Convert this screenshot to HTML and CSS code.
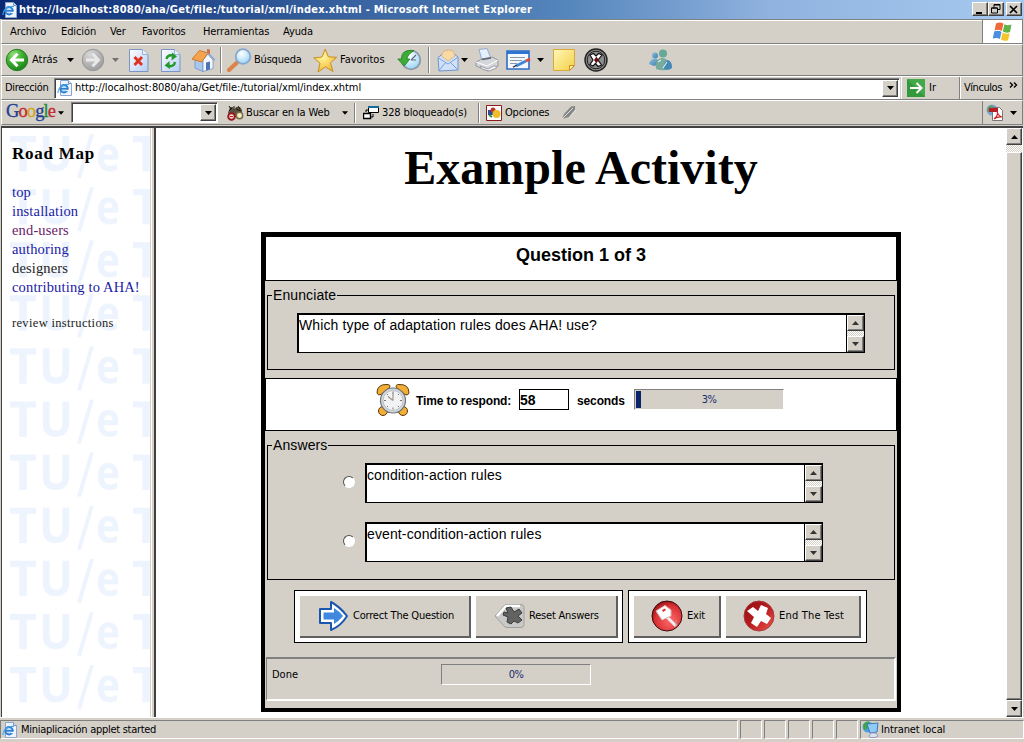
FILE: index.html
```html
<!DOCTYPE html>
<html lang="es">
<head>
<meta charset="utf-8">
<title>http://localhost:8080/aha/Get/file:/tutorial/xml/index.xhtml - Microsoft Internet Explorer</title>
<link rel="stylesheet" href="styles.css">
</head>
<body>
<svg class="defs" width="0" height="0">
  <defs>
    <linearGradient id="sheet" x1="0" y1="0" x2="1" y2="1"><stop offset="0" stop-color="#fff"/><stop offset="1" stop-color="#b4cdf2"/></linearGradient>
    <radialGradient id="green" cx=".35" cy=".25" r=".8"><stop offset="0" stop-color="#9be07c"/><stop offset=".5" stop-color="#3fae32"/><stop offset="1" stop-color="#19801a"/></radialGradient>
    <radialGradient id="grey" cx=".35" cy=".25" r=".8"><stop offset="0" stop-color="#d8d8d8"/><stop offset="1" stop-color="#9a9a9a"/></radialGradient>
    <radialGradient id="gold" cx=".4" cy=".35" r=".7"><stop offset="0" stop-color="#fff6a0"/><stop offset="1" stop-color="#f3b52c"/></radialGradient>
    <radialGradient id="lens" cx=".4" cy=".3" r=".8"><stop offset="0" stop-color="#fff"/><stop offset="1" stop-color="#8fd0f4"/></radialGradient>
    <radialGradient id="red" cx=".6" cy=".65" r=".7"><stop offset="0" stop-color="#ff6a6a"/><stop offset=".7" stop-color="#d93034"/><stop offset="1" stop-color="#8a1014"/></radialGradient>
    <linearGradient id="darkred" x1="0" y1="0" x2="1" y2="1"><stop offset="0" stop-color="#8d0d10"/><stop offset=".5" stop-color="#b81c1f"/><stop offset="1" stop-color="#ef5a50"/></linearGradient>
    <linearGradient id="note" x1="0" y1="0" x2="1" y2="1"><stop offset="0" stop-color="#fff8b8"/><stop offset="1" stop-color="#f4cf45"/></linearGradient>
    <linearGradient id="person" x1="0" y1="0" x2="1" y2="1"><stop offset="0" stop-color="#8fc3df"/><stop offset="1" stop-color="#3a7aa8"/></linearGradient>
    <pattern id="tue" x="7" y="6" width="123" height="53.1" patternUnits="userSpaceOnUse">
      <g class="mark"><text x="0" y="37" textLength="28" lengthAdjust="spacingAndGlyphs">T</text><text x="30" y="37" textLength="34" lengthAdjust="spacingAndGlyphs">U</text><path d="M83 0 70 44" stroke="#eef4fd" stroke-width="4"/><text x="87" y="37" textLength="24" lengthAdjust="spacingAndGlyphs">e</text></g>
    </pattern>
    <symbol id="ie" viewBox="0 0 16 16"><path d="M3.500.5h8l3 3v12h-11z" fill="#eef4fd" stroke="#8ea6cc"/><path d="M11.500.5v3h3" fill="#cfe0f8" stroke="#7d94bd"/><circle cx="7" cy="8.800" r="3.700" fill="#bfe0fa" stroke="#2a7fd0" stroke-width="2"/><path d="M4 8.800h6.500" stroke="#2a78c8" stroke-width="1.500"/><path d="M9 10.500h3" stroke="#eef4fd" stroke-width="1.300"/><path d="M1 13C.5 9 5 3.500 12 4.500" fill="none" stroke="#4aa3e6" stroke-width="1.200"/></symbol>
    <symbol id="down" viewBox="0 0 7 4"><path d="M0 0h7L3.500 4z" fill="#000"/></symbol>
    <symbol id="up" viewBox="0 0 7 4"><path d="M0 4h7L3.500 0z" fill="#000"/></symbol>
  </defs>
</svg>
<div class="window">
  <header class="titlebar">
    <svg class="i16 title-icon"><use href="#ie"/></svg>
    <span class="title-text">http://localhost:8080/aha/Get/file:/tutorial/xml/index.xhtml - Microsoft Internet Explorer</span>
    <div class="caption-buttons">
      <i class="cap"><svg width="10" height="9"><path d="M1 7h6v2H1z"/></svg></i>
      <i class="cap"><svg width="10" height="10" fill="none" stroke="#000"><path d="M3 3.500V.5h6v5H7M3 1h6"/><path d="M.5 4v5h6V4zM.5 4h6" stroke-width="1"/></svg></i>
      <i class="cap close"><svg width="10" height="9" stroke="#000" stroke-width="1.700"><path d="M1 1l7 7M8 1L1 8"/></svg></i>
    </div>
  </header>

  <nav class="band menu">
    <span class="m1">Archivo</span><span class="m2">Edición</span><span class="m3">Ver</span><span class="m4">Favoritos</span><span class="m5">Herramientas</span><span class="m6">Ayuda</span>
    <div class="flag"><svg width="22" height="20" viewBox="0 0 22 20"><path d="M4 1.500q4-2.200 7.500.2L9.800 9Q6.500 7 2.500 8.500z" fill="#ef6a3a"/><path d="M12.500 2.200q3.500 2 7 .4L18 10q-3.500 1.500-7.200-.5z" fill="#62b346"/><path d="M2.200 9.600q4-1.600 7.300.3L7.900 17Q5 15 .8 16.600z" fill="#4a8fe0"/><path d="M10.600 10.500q3.600 2 7.200.7L16 18.200q-3.400 1.400-7-.7z" fill="#f6c52c"/></svg></div>
  </nav>

  <div class="band tools">
    <svg class="t-back" width="24" height="24"><circle cx="12" cy="12" r="10.700" fill="url(#green)" stroke="#238022"/><path d="M19 12H7M12.500 5.800 6.500 12l6 6.200" fill="none" stroke="#fff" stroke-width="3"/></svg>
    <span class="l-back">Atrás</span><svg class="caret c1"><use href="#down"/></svg>
    <svg class="t-fwd" width="24" height="24"><circle cx="12" cy="12" r="10.700" fill="url(#grey)" stroke="#969696"/><path d="M5 12h12M11.500 5.800l6 6.200-6 6.200" fill="none" stroke="#e9e9e9" stroke-width="2.800"/></svg>
    <svg class="caret c2"><use href="#down"/></svg>
    <svg class="t-stop" width="20" height="23"><path d="M.5.500h13l5.500 5v17H.5z" fill="url(#sheet)" stroke="#7a95c4"/><path d="M13.500.5v5H19" fill="#e9f1fd" stroke="#9ab2d8"/><path d="M5.500 8l7.500 8M13 8l-7.500 8" stroke="#e03020" stroke-width="2.800"/></svg>
    <svg class="t-refresh" width="20" height="23"><path d="M.5.500h13l5.500 5v17H.5z" fill="url(#sheet)" stroke="#7a95c4"/><path d="M13.500.5v5H19" fill="#e9f1fd" stroke="#9ab2d8"/><path d="M5.500 10q1-4.500 6.500-3.500M14 13q-1 5-6.500 4" fill="none" stroke="#249a2c" stroke-width="2.400"/><path d="M11 3.500l5 4-5.500 4zM8.500 12l-5 4.500 5.500 3.500z" fill="#249a2c"/></svg>
    <svg class="t-home" width="26" height="24"><path d="M5 12v8l8 3.500V11z" fill="#a8c8f0" stroke="#7592c4" stroke-width=".8"/><path d="M13 12l5-6 5 6v8.500l-10 3z" fill="#f5f9ff" stroke="#7592c4" stroke-width=".8"/><path d="M2 11 9.500 2.500 18 5l-6.500 9z" fill="#f5a34c" stroke="#cc7a2e"/><path d="M17.500 4.500l7 8" stroke="#8fa9d2" stroke-width="2"/><path d="M16 14.500l4-1v7.700l-4 1.200z" fill="#4c76b8"/><path d="M17 1l3 .5v5l-3-2z" fill="#d0704b"/></svg>
    <i class="sep s1"></i>
    <svg class="t-search" width="25" height="24"><path d="M10 14.500 2 22" stroke="#dc8448" stroke-width="4.200" stroke-linecap="round"/><circle cx="16" cy="8.500" r="7.300" fill="url(#lens)" stroke="#86a8cf" stroke-width="1.800"/></svg>
    <span class="l-search">Búsqueda</span>
    <svg class="t-star" width="25" height="25"><path d="M12.200 1l3.200 7.800 8.300.5-6.300 5.600 2.600 8.600-7.600-4.600-7.400 5.100 2-8.800L.8 9.800l8.200-.7z" fill="url(#gold)" stroke="#c98f25"/></svg>
    <span class="l-fav">Favoritos</span>
    <svg class="t-hist" width="25" height="24"><circle cx="14" cy="12" r="9.300" fill="url(#lens)" stroke="#8b99a8" stroke-width="1.800"/><path d="M14 12l5-5M14 12h5" stroke="#5a6a7a" stroke-width="1.200"/><path d="M17 2.500Q4 1 4.500 11H.8l6.500 7 5.500-7H10q0-4 7-8.500z" fill="#3dac37" stroke="#1f7e20" stroke-width=".8"/></svg>
    <i class="sep s2"></i>
    <svg class="t-mail" width="22" height="24"><path d="M1 9.500 9.500 3q2-1 4 0L21 9v13L2 23z" fill="#cfe2fa" stroke="#6f93cc"/><path d="M4.500 8q1-6 7-6t6.500 6l-7 5z" fill="#f9d9a4" stroke="#e0a868" stroke-width=".7"/><path d="M1.500 10l9.500 6 9.500-6.500M2 22.500l6.500-8M20.500 21.500 13.500 14.500" fill="none" stroke="#7ba0d8"/></svg>
    <svg class="caret c3"><use href="#down"/></svg>
    <svg class="t-print" width="24" height="24"><path d="M4 1.500 12 .5l4 10-9 2z" fill="#e3effd" stroke="#829dcc" stroke-width=".8"/><path d="M1 14l6-3 10-2 6 3v6l-10 5L1 18z" fill="#d4d6da" stroke="#83878e" stroke-width=".8"/><path d="M7 11.500l9-1.500" stroke="#5f6670" stroke-width="1.500"/><path d="M1 14l11 4 11-6" fill="none" stroke="#fff"/><path d="M5 18l8 3 7-3.500 1.500 2.500L14 23l-7-2z" fill="#f7f8fa" stroke="#8b8f95" stroke-width=".8"/></svg>
    <svg class="t-edit" width="26" height="20"><path d="M1 1h22v18H1z" fill="#f3f7fe" stroke="#2f6cc6" stroke-width="1.600"/><path d="M1 1h22v3H1z" fill="#2f74d0"/><path d="M4 7.500h15M4 10.500h12M4 13.500h7" stroke="#8a97ac"/><path d="M10 16l10-5" stroke="#3d86d8" stroke-width="2.800"/><path d="M20 11l4-2" stroke="#e24a3b" stroke-width="3"/><path d="M7 17.200l3.500-2" stroke="#222" stroke-width="1.300"/></svg>
    <svg class="caret c4"><use href="#down"/></svg>
    <svg class="t-note" width="22" height="22"><path d="M.5.500h21V17l-5 4.500H.5z" fill="url(#note)" stroke="#dba93a"/><path d="M21.500 16.500h-5v5z" fill="#fff0a0" stroke="#c98f2d"/></svg>
    <svg class="t-x" width="24" height="24"><circle cx="12" cy="12" r="11" fill="#8c8c8c" stroke="#222" stroke-width="1.400"/><circle cx="12" cy="12" r="8.800" fill="#8c8c8c" stroke="#222" stroke-width="1"/><path d="M6 7l3.500-1.500L12 8l2.500-2.500L18 7l-4 5 3.500 5-3.500 1.500-2.500-3-2.500 2.500L6 16.500 9 12z" fill="#fff" stroke="#111" stroke-width="1.200"/><path d="M12.500 8.500l2 3.500-2 3.500-2.500-3.500z" fill="#611"/></svg>
    <svg class="t-msn" width="26" height="22"><g fill="url(#person)"><circle cx="7" cy="6.500" r="3"/><path d="M1 15q1-5 6-5.500 4 .5 5 5.500l-6 2z"/></g><circle cx="15" cy="4.500" r="4" fill="#65a997"/><path d="M8 20q-1-10 6-11 8 0 8 11-7 2.500-14 0z" fill="#77ac9c"/><path d="M16 20q-1-7 4-9 4.500 2 4 8-3 3-8 1z" fill="#4688b5"/><path d="M10 13l3-2M15 19l4-6" stroke="#d7ece8" stroke-width="1.200"/></svg>
  </div>

  <div class="band address">
    <span class="l-dir">Dirección</span>
    <div class="addr-box"><svg class="i16"><use href="#ie"/></svg><span class="l-url">http://localhost:8080/aha/Get/file:/tutorial/xml/index.xhtml</span><i class="drop"><svg class="caret"><use href="#down"/></svg></i></div>
    <div class="go"><svg width="18" height="18"><path d="M0 0h18v18H0z" fill="#329a3b"/><path d="M0 0h18v18z" fill="#54b556" opacity=".5"/><path d="M3 9h11M9.500 4l5 5-5 5" fill="none" stroke="#fff" stroke-width="2"/></svg><span class="l-go">Ir</span></div>
    <div class="links"><span class="l-links">Vínculos</span><svg width="9" height="6" fill="none" stroke="#000" stroke-width="1.400"><path d="M1 .5 3.500 3 1 5.500M5 .5 7.500 3 5 5.500"/></svg></div>
  </div>

  <div class="band google">
    <span class="logo"><b class="gb">G</b><b class="gr">o</b><b class="gy">o</b><b class="gb">g</b><b class="gg">l</b><b class="gr">e</b></span>
    <svg class="caret g1"><use href="#down"/></svg>
    <div class="g-box"><i class="drop"><svg class="caret"><use href="#down"/></svg></i></div>
    <svg class="g-bino" width="17" height="16"><path d="M1 8 3 2h3l1 3 2-3h4l2 3v5l-3 2H3z" fill="#5b5142"/><path d="M2 1l2 3M7 1v4M11 1l2 3M5 3l-3 3M9 4l5 2" stroke="#17130d"/><circle cx="4.500" cy="11.500" r="3.300" fill="#fbdedb" stroke="#9b181a" stroke-width="1.900"/><circle cx="12.500" cy="10.500" r="3.200" fill="#f8edc1" stroke="#766b4d" stroke-width="1.500"/><path d="M3 11.500h3" stroke="#c11d20"/></svg>
    <span class="l-buscar">Buscar en la Web</span><svg class="caret g2"><use href="#down"/></svg>
    <i class="sep s3"></i>
    <svg class="g-pop" width="16" height="15"><path d="M5.500 1.500h10v6h-10z" fill="#fff" stroke="#000"/><path d="M5 1h11v2H5z" fill="#156c9b"/><path d="M.5 8.500h7v5h-7z" fill="#fff" stroke="#000" stroke-width="1.400"/><path d="M10 9v3H8M3 7V5h2" fill="none" stroke="#000"/></svg>
    <span class="l-block">328 bloqueado(s)</span>
    <i class="sep s4"></i>
    <svg class="g-opt" width="16" height="16"><path d="M.5.500h15v15H.5z" fill="#fff" stroke="#8a1b20"/><path d="M2 5h5v5H2z" fill="#26509f"/><circle cx="7" cy="5" r="2.500" fill="#bd3528"/><circle cx="10.500" cy="9" r="4" fill="#efbc2d"/><path d="M3 10l3 2" stroke="#2e8a3d" stroke-width="2"/></svg>
    <span class="l-opt">Opciones</span>
    <svg class="g-pen" width="16" height="15"><path d="M1 14 3 9 10 1.500l4-.5v3.500L8 12z" fill="#858585"/><path d="M1 14 12 3M8.500 12.500 15 5" stroke="#e2e2e2" stroke-width="1"/></svg>
    <div class="pdf"><svg width="18" height="17"><circle cx="6" cy="6" r="5.500" fill="#7ea4cc"/><path d="M2 3q3-3 6 0l-3 4-4 1z" fill="#5c9c67"/><path d="M6.500 3.500h7l3 3v10h-10z" fill="#fff" stroke="#777"/><path d="M3 4h9v4H3z" fill="#b51c25"/><path d="M8 15q5-4 3-8 1 5 5 6-5-.5-8 2z" fill="none" stroke="#c22" stroke-width="1.200"/></svg><svg class="caret"><use href="#down"/></svg></div>
  </div>

  <main class="content">
    <aside class="sidebar">
      <svg class="wallpaper" width="148" height="588"><rect width="148" height="588" fill="url(#tue)"/></svg>
      <h2>Road Map</h2>
      <ul>
        <li><a>top</a></li><li><a>installation</a></li><li><a class="visited">end-users</a></li><li><a>authoring</a></li><li><a class="plain">designers</a></li><li><a>contributing to AHA!</a></li>
      </ul>
      <p>review instructions</p>
    </aside>
    <div class="splitter"></div>
    <section class="page">
      <h1>Example Activity</h1>
      <div class="applet">
        <div class="panel question">Question 1 of 3</div>
        <div class="group enun">
          <span class="legend">Enunciate</span>
          <div class="area wide"><span class="txt">Which type of adaptation rules does AHA! use?</span><div class="sb"><i class="sbb"><svg class="caret"><use href="#up"/></svg></i><i class="sbt"></i><i class="sbb"><svg class="caret"><use href="#down"/></svg></i></div></div>
        </div>
        <div class="panel timer">
          <svg class="clock" width="34" height="34"><g fill="#f2ae35" stroke="#5b3a0b" stroke-width="1"><path d="M1 10Q1 1 11 1.500q4 0 2.500 3L5 11.500q-3 1.500-4-1.500zM33 10Q33 1 23 1.500q-4 0-2.500 3l8.500 7q3 1.500 4-1.500z"/><circle cx="7" cy="28" r="4.500"/><circle cx="27" cy="28" r="4.500"/></g><circle cx="17" cy="17.500" r="12.500" fill="#d3d7da" stroke="#6d7276" stroke-width="1.200"/><circle cx="17" cy="17.500" r="10" fill="#f1f2f4" stroke="#b9c0c6"/><path d="M17 17.500V10M17 17.500l-5-4" stroke="#a08a86" stroke-width="1.100"/><path d="M17 8.500v2M17 24.500v2M8 17.500h2M24 17.500h2M11 11l1 1M23 11l-1 1M11 24l1-1M23 24l-1-1" stroke="#777"/></svg>
          <b class="l-time">Time to respond:</b><b class="num">58</b><b class="l-sec">seconds</b>
          <div class="progress p3"><i class="fill"></i><span>3%</span></div>
        </div>
        <div class="group ans">
          <span class="legend">Answers</span>
          <div class="row"><i class="radio"></i><div class="area"><span class="txt">condition-action rules</span><div class="sb"><i class="sbb"><svg class="caret"><use href="#up"/></svg></i><i class="sbt"></i><i class="sbb"><svg class="caret"><use href="#down"/></svg></i></div></div></div>
          <div class="row"><i class="radio"></i><div class="area"><span class="txt">event-condition-action rules</span><div class="sb"><i class="sbb"><svg class="caret"><use href="#up"/></svg></i><i class="sbt"></i><i class="sbb"><svg class="caret"><use href="#down"/></svg></i></div></div></div>
        </div>
        <div class="buttons">
          <div class="set first">
            <div class="btn b1"><svg width="32" height="32"><path d="M2 9h11V2q8 4 16 14-6 10-16 14v-7H2z" fill="#fff" stroke="#1b56b0" stroke-width="2" stroke-linejoin="round"/><path d="M5.500 12.500H16V8q5 3 9 8-4 5-9 8v-4.500H5.500z" fill="#3f88dd"/></svg><span>Correct The Question</span></div>
            <div class="btn b2"><svg width="32" height="26"><path d="M1 13 10 3q1-1.500 3-1.500h14q3 0 3 3v17q0 3-3 3H13q-2 0-3-1.500z" fill="#c9c9c7" stroke="#9f9f9d"/><path d="M3 13 11 4q1-1 3-1h12" fill="none" stroke="#fff" stroke-width="2.500"/><path d="M12 5l5-1 3 5 5-3 3 4-4 3 4 4-4 3-4-2-3 3-4-2 1-5-5-2 1-3 4 1z" fill="#626262" stroke="#3a3a3a"/></svg><span>Reset Answers</span></div>
          </div>
          <div class="set">
            <div class="btn b3"><svg width="32" height="32"><circle cx="16" cy="16" r="15" fill="url(#red)" stroke="#3b0808"/><path d="M16 17l9 9" stroke="#eee" stroke-width="3"/><path d="M25 20v6" stroke="#aaa"/><path d="M5 11l9-5.500 6 4.500v6l-9 4z" fill="#fff" stroke="#d7b8b8"/><path d="M11 10l3-1.500 1 1.500-3 2z" fill="#d93034"/></svg><span>Exit</span></div>
            <div class="btn b4"><svg width="32" height="32"><circle cx="16" cy="16" r="15" fill="url(#darkred)" stroke="#a9393a"/><path d="M4 11l6-4 5 4 3-6 7 3-2 6 5 4-4 6-6-3-4 6-6-4 3-6z" fill="#fff"/></svg><span>End The Test</span></div>
          </div>
        </div>
        <div class="foot"><span class="l-done">Done</span><div class="progress p0"><span>0%</span></div></div>
      </div>
    </section>
    <div class="scroll"><i class="sbb"><svg class="caret"><use href="#up"/></svg></i><i class="track"></i><i class="thumb"></i><i class="sbb"><svg class="caret"><use href="#down"/></svg></i></div>
  </main>

  <footer class="status">
    <div class="cell c-main"><svg class="i16"><use href="#ie"/></svg><span class="l-mini">Miniaplicación applet started</span></div>
    <div class="cell sm"></div><div class="cell sm"></div><div class="cell sm"></div><div class="cell sm"></div><div class="cell sm"></div>
    <div class="cell c-zone"><svg width="18" height="17"><circle cx="6" cy="6" r="5.500" fill="#4ea0dd"/><path d="M1 4q3-5 7-3L5 8 2 9z" fill="#3fa34b"/><path d="M5 3l11-1-1 9-7 1z" fill="#8fcbf5" stroke="#3a78bd"/><path d="M9 12h5l2 3-3 1.500H8L7 15z" fill="#d7e3f0" stroke="#99b"/></svg><span class="l-zone">Intranet local</span></div>
  </footer>
</div>
</body>
</html>
```
FILE: styles.css
```css
* { box-sizing: border-box; }
body { margin: 0; background: #d4d0c8; color: #000; font: 11px/14px "DejaVu Sans Condensed", "DejaVu Sans", sans-serif; font-stretch: condensed; overflow: hidden; }
svg { display: block; flex: none; }
i { display: block; font-style: normal; flex: none; }
span, b { white-space: nowrap; flex: none; }
.defs { position: absolute; }
.window { width: 1024px; height: 742px; display: flex; flex-direction: column; background: #d4d0c8; }
.i16 { width: 16px; height: 16px; }
.caret { width: 7px; height: 4px; }

.titlebar { height: 19px; flex: none; display: flex; align-items: center; background: linear-gradient(90deg, #0a2a74, #5485bb 55%, #90b2df 75%, #a6caf0); color: #fff; }
.title-icon { margin-left: 2px; }
.title-text { width: 900px; margin-left: 1px; font-weight: bold; letter-spacing: .245px; }
.caption-buttons { display: flex; margin-left: auto; padding: 0 2px 1px 0; }
.cap, .drop, .sbb { background: #d4d0c8; border: 1px solid; border-color: #fff #404040 #404040 #fff; box-shadow: inset -1px -1px #808080; display: flex; align-items: center; justify-content: center; }
.cap { width: 16px; height: 14px; }
.cap.close { margin-left: 2px; }

.band { flex: none; display: flex; align-items: center; border-top: 1px solid #fff; border-bottom: 1px solid #808080; border-right: 1px solid #808080; border-left: 1px solid #fff; margin: 0 1px; }
.menu { height: 25px; border-top-color: #808080; box-shadow: inset 0 1px #fff; padding-left: 8px; letter-spacing: -.1px; }
.m1 { width: 51px; } .m2 { width: 49px; } .m3 { width: 32px; } .m4 { width: 61px; } .m5 { width: 80px; }
.flag { margin-left: auto; width: 40px; height: 23px; background: #fff; border-left: 1px solid #808080; display: flex; justify-content: center; align-items: center; }
.tools { height: 32px; }
.sep { width: 2px; border-left: 1px solid #808080; border-right: 1px solid #fff; height: 26px; }
.t-back { margin-left: 3px; }
.l-back { margin-left: 3px; width: 35px; }
.c2 { margin-left: 7px; opacity: .45; }
.t-fwd { margin-left: 7px; }
.t-stop { margin-left: 10px; }
.t-refresh { margin-left: 12px; }
.t-home { margin-left: 9px; }
.s1 { margin-left: 4px; }
.t-search { margin-left: 5px; }
.l-search { margin-left: 2px; width: 59px; letter-spacing: -.2px; }
.l-fav { margin-left: 2px; width: 57px; }
.s2 { margin-left: 6px; }
.t-mail { margin-left: 7px; }
.c3 { margin-left: 2px; }
.t-print { margin-left: 7px; }
.t-edit { margin-left: 7px; }
.c4 { margin-left: 5px; }
.t-note { margin-left: 9px; }
.t-x { margin-left: 9px; }
.t-msn { margin-left: 40px; }

.address { height: 24px; padding-left: 3px; }
.l-dir { width: 49px; letter-spacing: -.3px; }
.addr-box, .g-box { background: #fff; border: 1px solid; border-color: #808080 #fff #fff #808080; box-shadow: inset 1px 1px #404040; display: flex; align-items: center; }
.addr-box { width: 846px; height: 21px; padding-left: 2px; }
.l-url { margin-left: 2px; letter-spacing: -.07px; }
.drop { width: 16px; height: 17px; margin-left: auto; margin-right: 1px; }
.go { display: flex; align-items: center; border-left: 1px solid #fff; border-right: 1px solid #808080; height: 22px; width: 59px; padding-left: 5px; margin-left: 1px; }
.l-go { margin-left: 4px; }
.links { display: flex; align-items: center; border-left: 1px solid #fff; height: 22px; padding-left: 3px; }
.l-links { width: 45px; letter-spacing: -.45px; }
.links svg { margin-bottom: 6px; }

.google { height: 25px; }
.logo { font: 18.500px/22px "Liberation Serif", serif; width: 52px; margin-left: 4px; padding-bottom: 3px; letter-spacing: -.9px; }
.logo b { font-weight: normal; -webkit-text-stroke: .3px; }
.gb { color: #1c3f94; } .gr { color: #c3272b; } .gy { color: #d0a514; } .gg { color: #238a3b; }
.g1 { width: 6px; margin-left: 0; }
.g-box { width: 147px; height: 21px; margin-left: 7px; }
.g-bino { margin-left: 9px; }
.l-buscar { margin-left: 2px; width: 96px; letter-spacing: -.15px; }
.g2 { width: 6px; }
.s3 { margin-left: 6px; height: 20px; }
.g-pop { margin-left: 7px; }
.l-block { margin-left: 3px; width: 96px; letter-spacing: -.13px; }
.s4 { height: 20px; }
.g-opt { margin-left: 6px; }
.l-opt { margin-left: 3px; width: 56px; letter-spacing: -.2px; }
.pdf { margin-left: auto; width: 40px; height: 23px; display: flex; align-items: center; border-left: 1px solid #808080; padding-left: 3px; gap: 6px; }

.content { flex: none; height: 591px; margin: 1px 1px 0; border-top: 2px solid #404040; border-left: 1px solid #404040; display: flex; background: #fff; }
.sidebar { position: relative; width: 148px; padding: 16px 0 0 10px; font-family: "Liberation Serif", serif; overflow: hidden; }
.wallpaper { position: absolute; left: 0; top: 0; }
.mark { font: bold 49px "Open Sans", sans-serif; fill: #eef4fd; }
.sidebar h2, .sidebar ul, .sidebar p { position: relative; margin: 0; padding: 0; list-style: none; white-space: nowrap; }
.sidebar h2 { font-size: 17px; line-height: 20px; letter-spacing: .75px; }
.sidebar ul { margin-top: 19px; font-size: 14.500px; line-height: 19px; letter-spacing: .15px; color: #1a1aa6; }
.visited { color: #6b2168; } .plain { color: #222; }
.sidebar p { margin-top: 17px; font-size: 12.500px; line-height: 18px; letter-spacing: .33px; color: #222; }
.splitter { width: 6px; border-left: 1px solid #d4d0c8; border-right: 2px solid #404040; background: linear-gradient(90deg, #fff 1px, #d4d0c8 1px); }
.page { flex: 1; padding-left: 105px; min-width: 0; }
h1 { font: bold 48px/56px "Liberation Serif", serif; margin: 12px 0 36px; width: 640px; text-align: center; white-space: nowrap; }
.applet { width: 640px; height: 480px; border: 4px solid #000; background: #d4d0c8; }
.panel { background: #fff; border: 1px solid #000; }
.question { height: 45px; text-align: center; font: bold 18px/21px "Liberation Sans", sans-serif; padding-top: 8px; }
.group { border: 1px solid #000; position: relative; margin: 0 2px; }
.legend { position: absolute; left: 4px; top: -9px; background: #d4d0c8; padding: 0 1px; font: 14px/17px "Liberation Sans", sans-serif; letter-spacing: .1px; }
.enun { margin-top: 14px; height: 75px; padding: 17px 0 0 29px; }
.area { width: 458px; height: 40px; background: #fff; border: solid #000; border-width: 2px 1px 1px 2px; display: flex; justify-content: space-between; }
.area.wide { width: 568px; }
.txt { font: 14px/17px "Liberation Sans", sans-serif; padding-top: 2px; letter-spacing: .12px; }
.sb { width: 18px; height: 37px; border-left: 1px solid #000; display: flex; flex-direction: column; }
.sb .sbb { width: 17px; height: 16px; }
.sb .caret { opacity: .75; }
.sbt { flex: 1; }
.sbt, .track { background: repeating-conic-gradient(#fff 0 25%, #d4d0c8 0 50%) 0 0/2px 2px; }
.timer { margin-top: 8px; height: 53px; display: flex; align-items: flex-start; padding: 4px 0 0 110px; font: bold 12px/14px "Liberation Sans", sans-serif; letter-spacing: -.12px; }
.l-time { margin: 11px 0 0 6px; width: 103px; }
.num { width: 50px; height: 21px; border: 1px solid #000; margin-top: 6px; font-size: 14px; line-height: 20px; }
.l-sec { margin: 11px 0 0 8px; width: 57px; }
.progress { height: 21px; width: 150px; border: 1px solid; border-color: #808080 #fff #fff #808080; background: #d4d0c8; position: relative; text-align: center; font: 11px/19px "DejaVu Sans Condensed", sans-serif; letter-spacing: -.6px; color: #1a2a6c; }
.p3 { margin-top: 6px; }
.fill { position: absolute; left: 1px; top: 1px; width: 5px; height: 17px; background: #0a246a; }
.ans { margin-top: 14px; height: 135px; padding-top: 17px; }
.row { display: flex; align-items: center; padding-left: 75px; height: 40px; margin-bottom: 19px; }
.radio { width: 12px; height: 12px; margin-right: 10px; margin-top: -3px; border-radius: 50%; background: #fff; border: 1.500px solid; border-color: #505050 #fff #fff #505050; }
.buttons { display: flex; gap: 5px; margin: 10px 0 0 29px; }
.set { height: 53px; border: 1px solid #000; background: #fff; padding: 5px; display: flex; gap: 5px; }
.set.first { padding-right: 4px; }
.btn { height: 42px; background: #d4d0c8; border: solid #606060; border-width: 0 2px 2px 0; display: flex; align-items: center; letter-spacing: -.2px; }
.b1 { width: 171px; padding-left: 18px; } .b1 span { margin-left: 3px; }
.b2 { width: 142px; padding-left: 18px; } .b2 span { margin-left: 3px; }
.b3 { width: 87px; padding-left: 17px; } .b3 span { margin-left: 4px; }
.b4 { width: 135px; padding-left: 17px; } .b4 span { margin-left: 4px; letter-spacing: .2px; }
.foot { margin: 14px 1px 0; height: 44px; border: solid; border-width: 2px 2px 2px 1px; border-color: #808080 #fff #fff #808080; display: flex; align-items: flex-start; padding: 5px 0 0 5px; }
.l-done { width: 169px; margin-top: 4px; }
.scroll { width: 16px; margin-right: 1px; display: flex; flex-direction: column; }
.scroll .sbb { width: 16px; height: 17px; }
.track { height: 7px; }
.thumb { flex: 1; background: #d4d0c8; border: 1px solid; border-color: #fff #404040 #404040 #fff; box-shadow: inset -1px -1px #808080; }

.status { flex: 1; display: flex; align-items: flex-start; border-top: 1px solid #fff; padding-top: 2px; gap: 2px; }
.cell { height: 19px; border: 1px solid; border-color: #808080 #fff #fff #808080; display: flex; align-items: center; }
.c-main { width: 738px; padding-left: 1px; }
.sm { width: 22px; }
.c-zone { flex: 1; padding-left: 1px; gap: 1px; letter-spacing: -.1px; }
.l-mini { margin-left: 3px; letter-spacing: -.28px; }
```
